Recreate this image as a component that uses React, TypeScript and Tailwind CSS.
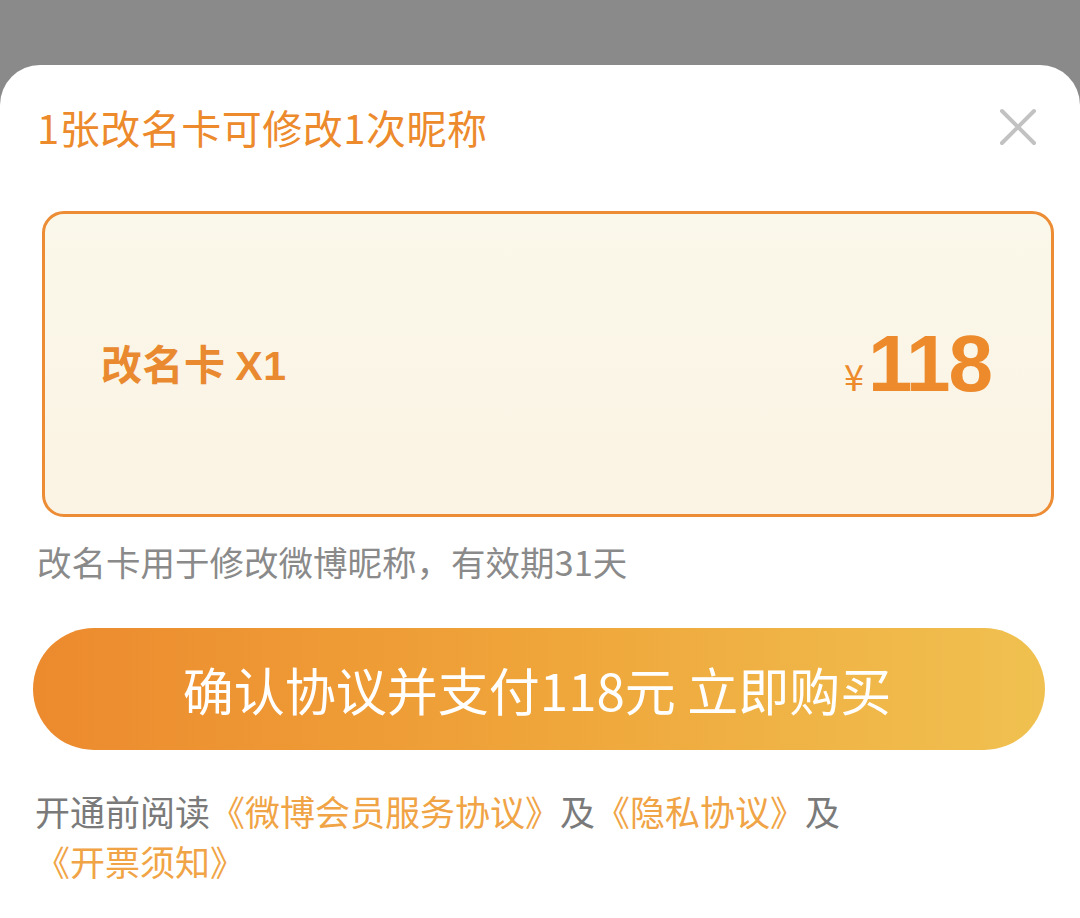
import React from "react";

export default function App() {
  const cjk = { fontFamily: '"Noto Sans CJK SC", "Noto Sans", sans-serif' };
  return (
    <div className="h-[918px] w-[1080px] bg-[#8a8a8a] flex flex-col pt-[65px] overflow-hidden" style={cjk}>
      <div className="flex-1 bg-white rounded-t-[40px] flex flex-col px-[37px]">
        <div className="flex items-center justify-between h-[124px] shrink-0">
          <div className="text-[40px] leading-[48px] text-[#ec8a2c] tracking-[0.5px]">1张改名卡可修改1次昵称</div>
          <svg width="38" height="38" viewBox="0 0 38 38" className="mr-[6px]">
            <path d="M3 3 L35 35 M35 3 L3 35" stroke="#c2c2c2" strokeWidth="4" strokeLinecap="round" />
          </svg>
        </div>
        <div className="mt-[22px] ml-[5px] mr-[-11px] h-[306px] shrink-0 rounded-[22px] border-[3px] border-[#ec8d35] bg-gradient-to-b from-[#faf8ea] to-[#fbf3e4] flex items-center justify-between pl-[56px] pr-[60px]">
          <div className="text-[41px] font-bold text-[#e98a30] mt-[2px] tracking-[0.5px]">
            改名卡 <span style={{ fontFamily: '"Liberation Sans", Arial, sans-serif' }}>X1</span>
          </div>
          <div className="flex items-baseline text-[#ec8a2c]">
            <span className="text-[36px] font-normal mr-[4px]">¥</span>
            <span
              className="text-[80px] font-bold leading-none tracking-[-2px]"
              style={{ fontFamily: '"Liberation Sans", Arial, sans-serif' }}
            >
              118
            </span>
          </div>
        </div>
        <div className="mt-[22px] text-[34.5px] leading-[44px] text-[#8a8a8a]">改名卡用于修改微博昵称，有效期31天</div>
        <button
          className="mt-[45px] ml-[-4px] mr-[-2px] h-[122px] shrink-0 rounded-full bg-gradient-to-r from-[#ec8a2e] via-[#efa53a] to-[#f0c150] text-white text-[51px] flex items-center justify-center pr-[4px]"
          style={cjk}
        >
          确认协议并支付118元 立即购买
        </button>
        <div className="mt-[36px] ml-[-2px] text-[35px] leading-[50px] text-[#7a7a7a]">
          开通前阅读<span className="text-[#f0a445]">《微博会员服务协议》</span>及<span className="text-[#f0a445]">《隐私协议》</span>及
          <br />
          <span className="text-[#f0a445]">《开票须知》</span>
        </div>
      </div>
    </div>
  );
}
